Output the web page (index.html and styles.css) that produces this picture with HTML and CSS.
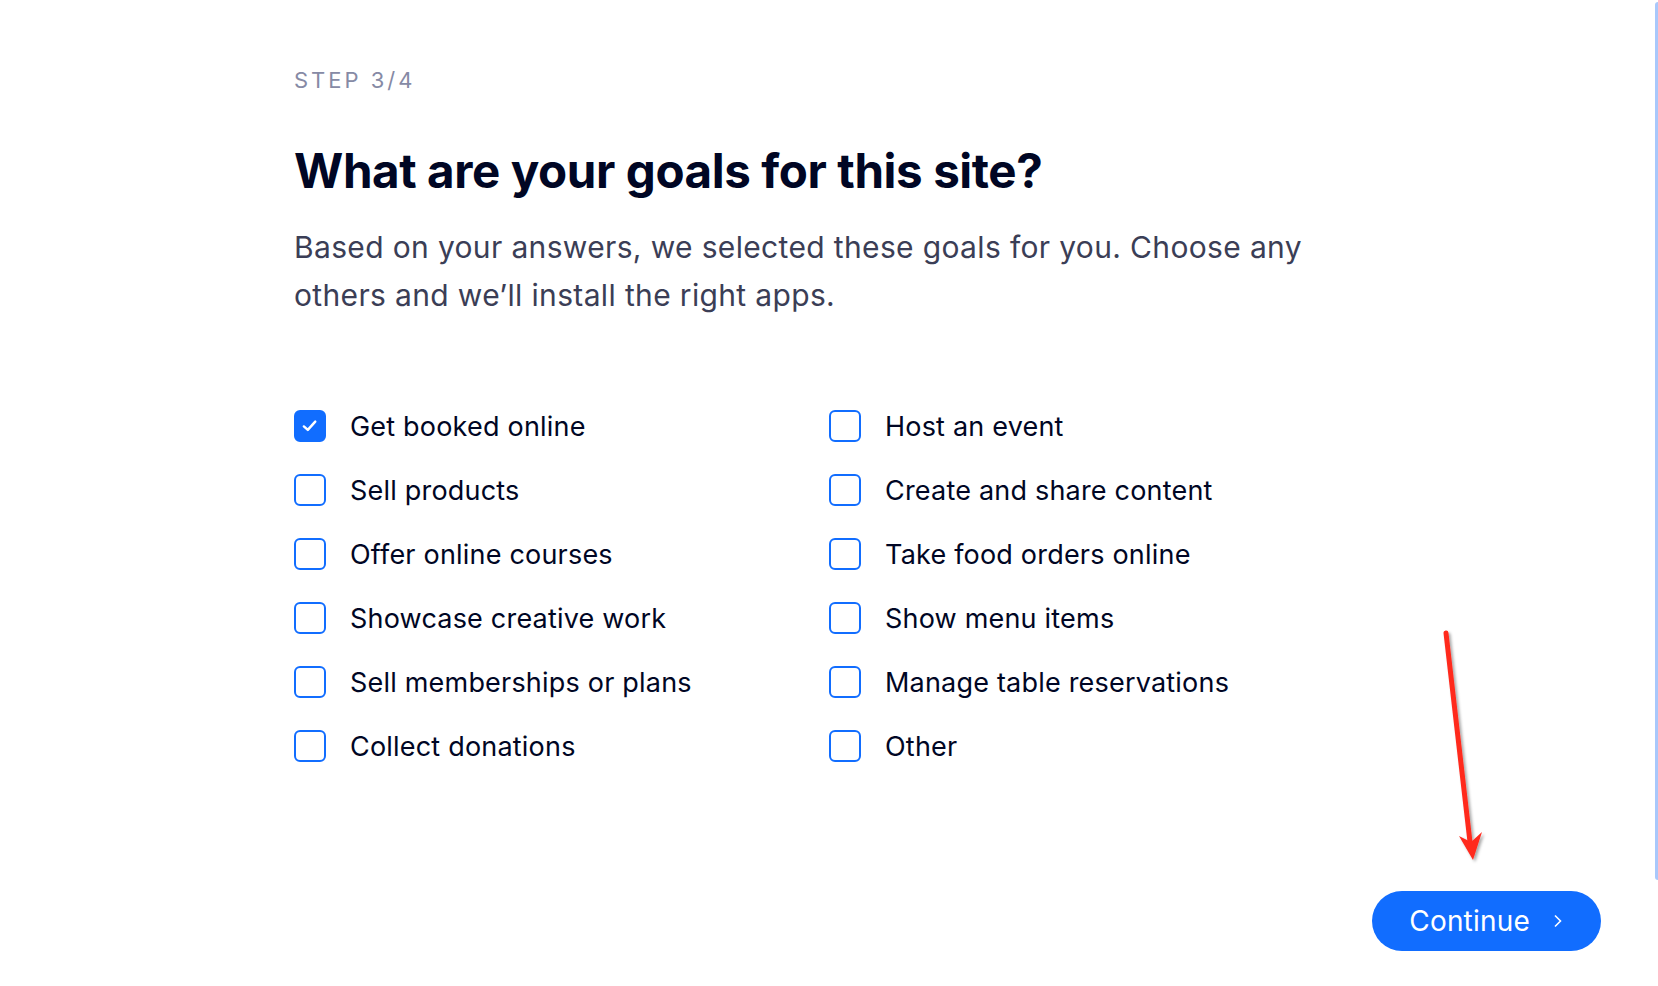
FILE: index.html
```html
<!DOCTYPE html>
<html lang="en">
<head>
    <meta charset="UTF-8">
    <meta name="viewport" content="width=device-width, initial-scale=1.0">
    <title>Site goals</title>
    <link rel="stylesheet" href="styles.css">
</head>
<body>
    <div class="page">
        <div class="main">
            <div class="content">
                <p class="step">STEP 3/4</p>
                <h1>What are your goals for this site?</h1>
                <p class="intro">Based on your answers, we selected these goals for you. Choose any others and we’ll install the right apps.</p>

                <div class="goals">
                    <label class="goal">
                        <input type="checkbox" checked>
                        <span class="box"></span>
                        <span>Get booked online</span>
                    </label>
                    <label class="goal">
                        <input type="checkbox">
                        <span class="box"></span>
                        <span>Host an event</span>
                    </label>
                    <label class="goal">
                        <input type="checkbox">
                        <span class="box"></span>
                        <span>Sell products</span>
                    </label>
                    <label class="goal">
                        <input type="checkbox">
                        <span class="box"></span>
                        <span>Create and share content</span>
                    </label>
                    <label class="goal">
                        <input type="checkbox">
                        <span class="box"></span>
                        <span>Offer online courses</span>
                    </label>
                    <label class="goal">
                        <input type="checkbox">
                        <span class="box"></span>
                        <span>Take food orders online</span>
                    </label>
                    <label class="goal">
                        <input type="checkbox">
                        <span class="box"></span>
                        <span>Showcase creative work</span>
                    </label>
                    <label class="goal">
                        <input type="checkbox">
                        <span class="box"></span>
                        <span>Show menu items</span>
                    </label>
                    <label class="goal">
                        <input type="checkbox">
                        <span class="box"></span>
                        <span>Sell memberships or plans</span>
                    </label>
                    <label class="goal">
                        <input type="checkbox">
                        <span class="box"></span>
                        <span>Manage table reservations</span>
                    </label>
                    <label class="goal">
                        <input type="checkbox">
                        <span class="box"></span>
                        <span>Collect donations</span>
                    </label>
                    <label class="goal">
                        <input type="checkbox">
                        <span class="box"></span>
                        <span>Other</span>
                    </label>
                </div>
            </div>

            <div class="footer">
                <button class="continue">
                    Continue
                    <svg width="10" height="14" viewBox="0 0 10 14"><path d="M2 1.5 L7.5 7 L2 12.5" fill="none" stroke="#fff" stroke-width="1.6"/></svg>
                </button>
            </div>
        </div>
        <div class="edge"></div>
    </div>

    <!-- red annotation arrow -->
    <svg class="arrow" width="60" height="250" viewBox="0 0 60 250">
        <defs>
            <filter id="shadow" x="-50%" y="-10%" width="200%" height="120%">
                <feDropShadow dx="2" dy="2" stdDeviation="1.5" flood-color="#000" flood-opacity="0.35"/>
            </filter>
        </defs>
        <g filter="url(#shadow)">
            <line x1="16" y1="13" x2="40" y2="222" stroke="#ff2a1f" stroke-width="5" stroke-linecap="round"/>
            <path d="M29 216 L43 240 L52 212 L41 222 Z" fill="#ff2a1f"/>
        </g>
    </svg>
</body>
</html>
```

FILE: styles.css
```css
* {
    margin: 0;
    padding: 0;
    box-sizing: border-box;
}

body {
    font-family: Inter, "Noto Sans", Arial, sans-serif;
    background-color: #fff;
    color: #000624;
}

.page {
    display: flex;
    height: 986px;
}

.main {
    flex: 1;
    display: flex;
    flex-direction: column;
    justify-content: space-between;
}

.content {
    padding: 65px 0 0 294px;
}

.step {
    font-size: 22px;
    line-height: 30px;
    letter-spacing: 3px;
    color: #868aa5;
}

h1 {
    margin-top: 46px;
    font-size: 47.5px;
    line-height: 60px;
    font-weight: 700;
    letter-spacing: -0.4px;
}

.intro {
    margin-top: 22px;
    width: 1080px;
    font-size: 30px;
    line-height: 48px;
    letter-spacing: 0.35px;
    color: #3b3e56;
}

.goals {
    margin-top: 75px;
    display: grid;
    grid-template-columns: 535px 535px;
    grid-auto-rows: 64px;
}

.goal {
    display: flex;
    align-items: center;
    gap: 24px;
    font-size: 27px;
    letter-spacing: 0.2px;
    cursor: pointer;
}

.goal input {
    display: none;
}

.box {
    width: 32px;
    height: 32px;
    border: 2px solid #116dff;
    border-radius: 6px;
    flex-shrink: 0;
}

.goal input:checked + .box {
    background-color: #116dff;
    background-image: url("data:image/svg+xml,%3Csvg xmlns='http://www.w3.org/2000/svg' viewBox='0 0 32 32'%3E%3Cpath d='M9 16.5 L13.5 20.5 L22 11' fill='none' stroke='white' stroke-width='2.8' stroke-linecap='round' stroke-linejoin='round'/%3E%3C/svg%3E");
}

.footer {
    display: flex;
    justify-content: flex-end;
    padding: 0 54px 35px 0;
}

.continue {
    display: flex;
    align-items: center;
    gap: 23px;
    height: 60px;
    padding: 0 38px 0 37px;
    border: none;
    border-radius: 30px;
    background-color: #116dff;
    color: #fff;
    font-family: inherit;
    font-size: 28px;
    letter-spacing: 0.2px;
    cursor: pointer;
}

.edge {
    width: 3px;
    height: 878px;
    margin-top: 2px;
    background-color: #a9c8fb;
    border-top-left-radius: 3px;
    border-bottom-left-radius: 3px;
}

.arrow {
    position: absolute;
    left: 1430px;
    top: 620px;
}
```
